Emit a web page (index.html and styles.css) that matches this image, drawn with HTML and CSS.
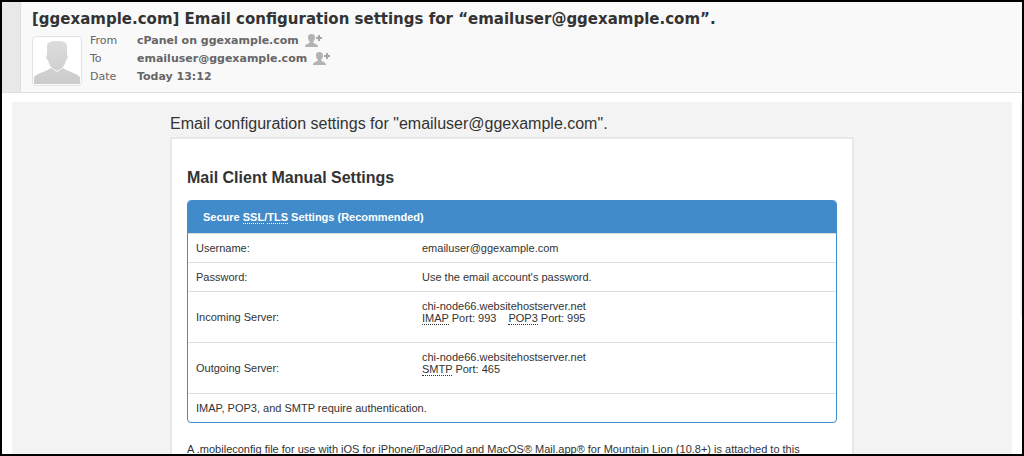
FILE: index.html
```html
<!DOCTYPE html>
<html lang="en">
  <head>
    <meta charset="UTF-8" />
    <title>Email configuration settings</title>
    <link rel="stylesheet" href="styles.css">
  </head>
  <body>
    <header class="message-header">
      <div class="header-strip"></div>
      <div class="header-main">
        <h1 class="subject">[ggexample.com] Email configuration settings for “emailuser@ggexample.com”.</h1>
        <div class="header-info">
          <div class="avatar">
            <svg viewBox="0 0 46 43" width="46" height="43">
              <defs>
                <linearGradient id="avatarFill" x1="0" y1="0" x2="0" y2="1">
                  <stop offset="0" stop-color="#dcdcdc" />
                  <stop offset="1" stop-color="#cbcbcb" />
                </linearGradient>
              </defs>
              <path fill="url(#avatarFill)" d="M23 0C29 0 33 1 33 5V14C34 14 34 19 32 19C31 23 30 25 28 27L23 30L18 27C16 25 15 23 14 19C12 19 12 14 13 14V5C13 1 17 0 23 0ZM17 27L23 31L29 27C34 31 43 32 46 36V43H0V36C3 32 12 31 17 27Z" />
            </svg>
          </div>
          <table class="headers">
            <tr>
              <th scope="row">From</th>
              <td>
                <span class="contact">cPanel on ggexample.com
                  <button class="add-contact" type="button" aria-label="Add sender to contacts">
                    <svg viewBox="0 0 18 14" width="18" height="14"><use href="#addContact" /></svg>
                  </button>
                </span>
              </td>
            </tr>
            <tr>
              <th scope="row">To</th>
              <td>
                <span class="contact">emailuser@ggexample.com
                  <button class="add-contact" type="button" aria-label="Add recipient to contacts">
                    <svg viewBox="0 0 18 14" width="18" height="14"><use href="#addContact" /></svg>
                  </button>
                </span>
              </td>
            </tr>
            <tr>
              <th scope="row">Date</th>
              <td>Today 13:12</td>
            </tr>
          </table>
        </div>
      </div>
    </header>

    <main class="message-view">
      <div class="message-body">
        <div class="content">
          <p class="intro">Email configuration settings for "emailuser@ggexample.com".</p>
          <section class="panel">
            <h2>Mail Client Manual Settings</h2>
            <div class="settings">
              <table>
                <colgroup>
                  <col class="col-label">
                  <col>
                </colgroup>
                <thead>
                  <tr>
                    <th colspan="2">Secure <abbr>SSL</abbr>/<abbr>TLS</abbr> Settings (Recommended)</th>
                  </tr>
                </thead>
                <tbody>
                  <tr>
                    <td>Username:</td>
                    <td>emailuser@ggexample.com</td>
                  </tr>
                  <tr>
                    <td>Password:</td>
                    <td>Use the email account's password.</td>
                  </tr>
                  <tr class="server">
                    <td>Incoming Server:</td>
                    <td>
                      <div class="host">chi-node66.websitehostserver.net</div>
                      <div class="ports">
                        <span><abbr>IMAP</abbr> Port: 993</span>
                        <span><abbr>POP3</abbr> Port: 995</span>
                      </div>
                    </td>
                  </tr>
                  <tr class="server">
                    <td>Outgoing Server:</td>
                    <td>
                      <div class="host">chi-node66.websitehostserver.net</div>
                      <div class="ports">
                        <span><abbr>SMTP</abbr> Port: 465</span>
                      </div>
                    </td>
                  </tr>
                  <tr>
                    <td colspan="2">IMAP, POP3, and SMTP require authentication.</td>
                  </tr>
                </tbody>
              </table>
            </div>
            <p class="note">A .mobileconfig file for use with iOS for iPhone/iPad/iPod and MacOS® Mail.app® for Mountain Lion (10.8+) is attached to this</p>
          </section>
        </div>
      </div>
      <div class="scroll-track"><div class="scroll-thumb"></div></div>
    </main>

    <svg class="sprite" width="0" height="0">
      <symbol id="addContact" viewBox="0 0 18 14">
        <path fill="#b3b3b3" d="M6.500 0C8.800 0 10 1.200 10 3.200C10 5 9.400 6.500 8.400 7.500V9C9.500 10 13 9.800 13 13H0C0 9.800 3.500 10 4.600 9V7.500C3.600 6.500 3 5 3 3.200C3 1.200 4.200 0 6.500 0Z" />
        <path fill="#a6a6a6" d="M13 1H15V3H17V5H15V7H13V5H11V3H13Z" />
      </symbol>
    </svg>
  </body>
</html>
```

FILE: styles.css
```css
*{
    box-sizing: border-box;
    margin: 0;
    padding: 0;
}
body{
    height: 100vh;
    display: flex;
    flex-direction: column;
    overflow: hidden;
    border: 2px solid #000;
    background: #fff;
    color: #333;
    font-family: "Liberation Sans", Arial, sans-serif;
    font-size: 11px;
    line-height: 12px;
}
.sprite{
    position: absolute;
}
/* header */
.message-header{
    display: flex;
    flex: none;
    background: #f9f9f9;
    border-bottom: 1px solid #dfdfdf;
    font-family: "DejaVu Sans", Verdana, sans-serif;
}
.header-strip{
    width: 19px;
    background: #e8e8e8;
    border-right: 1px solid #dfdfdf;
}
.header-main{
    padding: 8px 11px 6px;
}
.subject{
    color: #333;
    font-size: 15px;
    line-height: 18px;
    margin-bottom: 4px;
    white-space: nowrap;
}
.header-info{
    display: flex;
    align-items: flex-end;
    gap: 8px;
}
.avatar{
    width: 50px;
    height: 50px;
    padding: 4px 1px 1px;
    background: #fff;
    border: 1px solid #e2e2e2;
    border-radius: 4px;
}
.avatar svg{
    display: block;
}
.headers{
    border-collapse: collapse;
    color: #666;
    line-height: 18px;
}
.headers th{
    width: 47px;
    font-weight: normal;
    text-align: left;
}
.headers td{
    height: 18px;
    font-weight: bold;
}
.contact{
    display: flex;
    align-items: center;
    gap: 6px;
}
.add-contact{
    display: block;
    height: 14px;
    background: none;
    border: none;
    cursor: pointer;
}
.add-contact svg{
    display: block;
}
/* message */
.message-view{
    display: flex;
    flex: 1;
    min-height: 0;
    padding: 9px 0 0 10px;
}
.message-body{
    flex: 1;
    overflow: hidden;
    background: #f3f3f3;
}
.scroll-track{
    width: 10px;
    padding-left: 8px;
}
.scroll-thumb{
    height: 215px;
    background: #f3f3f3;
    border-radius: 2px 0 0 2px;
}
.content{
    max-width: 684px;
    margin: 0 auto;
    padding-top: 12px;
}
.intro{
    font-size: 16px;
    line-height: 20px;
    padding-bottom: 3px;
}
.panel{
    padding: 29px 15px;
    background: #fff;
    border: 2px solid #e8e8e8;
}
.panel h2{
    font-size: 16px;
    line-height: 20px;
    margin-bottom: 12px;
}
.settings{
    overflow: hidden;
    border: 1px solid #428bca;
    border-radius: 4px;
}
.settings table{
    width: 100%;
    table-layout: fixed;
    border-spacing: 0;
}
.col-label{
    width: 226px;
}
.settings th{
    padding: 10px 15px;
    background: #428bca;
    color: #fff;
    text-align: left;
}
.settings td{
    padding: 8px;
    border-top: 1px solid #ddd;
}
.settings .server td{
    height: 51px;
}
.host{
    margin-top: -4px;
}
.ports{
    display: flex;
    gap: 12px;
    padding-bottom: 6px;
}
abbr{
    border-bottom: 1px dotted currentColor;
}
.note{
    margin-top: 20px;
    white-space: nowrap;
}
```
